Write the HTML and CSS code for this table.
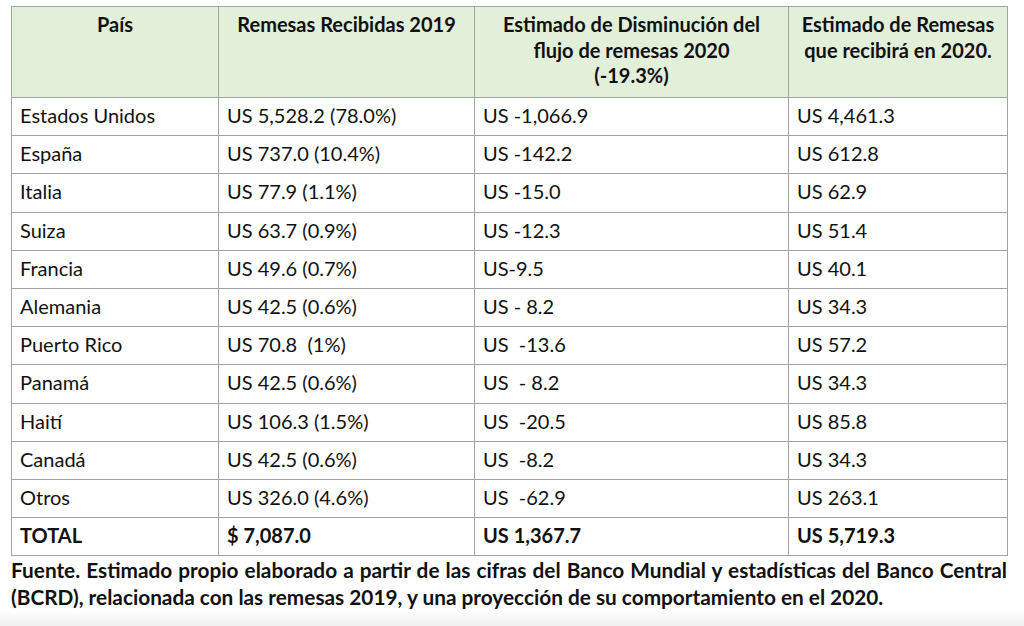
FILE: index.html
```html
<!DOCTYPE html>
<html lang="es">
<head>
<meta charset="utf-8">
<link rel="stylesheet" href="styles.css">
</head>
<body>
<div class="page">
  <table class="remesas">
    <colgroup>
      <col class="c1"><col class="c2"><col class="c3"><col class="c4">
    </colgroup>
    <thead>
      <tr>
        <th>País</th>
        <th>Remesas Recibidas 2019</th>
        <th>Estimado de Disminución del flujo de remesas 2020<br>(-19.3%)</th>
        <th>Estimado de Remesas que recibirá en 2020.</th>
      </tr>
    </thead>
    <tbody>
      <tr><td>Estados Unidos</td><td>US 5,528.2 (78.0%)</td><td>US -1,066.9</td><td>US 4,461.3</td></tr>
      <tr><td>España</td><td>US 737.0 (10.4%)</td><td>US -142.2</td><td>US 612.8</td></tr>
      <tr><td>Italia</td><td>US 77.9 (1.1%)</td><td>US -15.0</td><td>US 62.9</td></tr>
      <tr><td>Suiza</td><td>US 63.7 (0.9%)</td><td>US -12.3</td><td>US 51.4</td></tr>
      <tr><td>Francia</td><td>US 49.6 (0.7%)</td><td>US-9.5</td><td>US 40.1</td></tr>
      <tr><td>Alemania</td><td>US 42.5 (0.6%)</td><td>US - 8.2</td><td>US 34.3</td></tr>
      <tr><td>Puerto Rico</td><td>US 70.8&nbsp; (1%)</td><td>US&nbsp; -13.6</td><td>US 57.2</td></tr>
      <tr><td>Panamá</td><td>US 42.5 (0.6%)</td><td>US&nbsp; - 8.2</td><td>US 34.3</td></tr>
      <tr><td>Haití</td><td>US 106.3 (1.5%)</td><td>US&nbsp; -20.5</td><td>US 85.8</td></tr>
      <tr><td>Canadá</td><td>US 42.5 (0.6%)</td><td>US&nbsp; -8.2</td><td>US 34.3</td></tr>
      <tr><td>Otros</td><td>US 326.0 (4.6%)</td><td>US&nbsp; -62.9</td><td>US 263.1</td></tr>
      <tr class="total"><td>TOTAL</td><td>$ 7,087.0</td><td>US 1,367.7</td><td>US 5,719.3</td></tr>
    </tbody>
  </table>
  <p class="fuente">Fuente. Estimado propio elaborado a partir de las cifras del Banco Mundial y estadísticas del Banco Central (BCRD), relacionada con las remesas 2019, y una proyección de su comportamiento en el 2020.</p>
</div>
<div class="shade"></div>
</body>
</html>
```
FILE: styles.css
```css
html, body {
  margin: 0;
  padding: 0;
  background: #ffffff;
}
body {
  width: 1024px;
  height: 626px;
  overflow: hidden;
  display: flex;
  flex-direction: column;
  font-family: Lato, "Open Sans", sans-serif;
  color: #111111;
}
.page {
  padding: 6px 0 0 11px;
  width: 996px;
  flex: 1;
}
.remesas {
  border-collapse: collapse;
  width: 996px;
  table-layout: fixed;
  font-size: 20px;
}
.c1 { width: 207px; }
.c2 { width: 256px; }
.c3 { width: 314px; }
.c4 { width: 219px; }
.remesas th,
.remesas td {
  border: 1px solid #a3a3a3;
}
.remesas th {
  background: #e2efd9;
  height: 91px;
  padding: 5px 6px 0;
  box-sizing: border-box;
  vertical-align: top;
  text-align: center;
  font-weight: bold;
  line-height: 25.5px;
}
.remesas td {
  height: 38.2px;
  padding: 0 8px 3px;
  box-sizing: border-box;
  vertical-align: middle;
  line-height: 22px;
  white-space: nowrap;
}
.remesas .total td {
  font-weight: bold;
}
.fuente {
  margin: 0;
  font-weight: bold;
  font-size: 20.8px;
  line-height: 27px;
  text-align: justify;
  color: #111;
}
.shade {
  height: 16px;
  background: linear-gradient(#ffffff, #efefef);
}
```
